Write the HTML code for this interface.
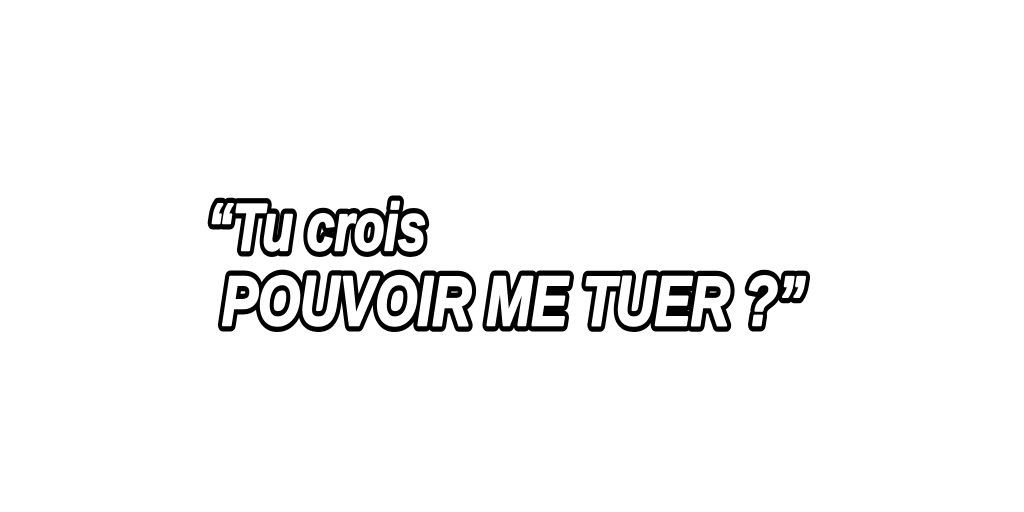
<!DOCTYPE html>
<html><head><style>html,body{margin:0;padding:0;background:#fff;width:1024px;height:512px;overflow:hidden}</style></head>
<body>
<svg width="1024" height="512" xmlns="http://www.w3.org/2000/svg">
<g font-family="'Liberation Sans Narrow','Liberation Sans',sans-serif" font-weight="bold" font-style="italic" stroke-linejoin="round">
<g fill="#000" stroke="#000" stroke-width="13">
<text x="208" y="250" font-size="66" textLength="218" lengthAdjust="spacingAndGlyphs">“Tu crois</text>
<text x="222" y="325" font-size="70" textLength="583" lengthAdjust="spacingAndGlyphs">POUVOIR ME TUER ?”</text>
</g>
<g fill="#fff" stroke="#fff" stroke-width="2.5">
<text x="208" y="250" font-size="66" textLength="218" lengthAdjust="spacingAndGlyphs">“Tu crois</text>
<text x="222" y="325" font-size="70" textLength="583" lengthAdjust="spacingAndGlyphs">POUVOIR ME TUER ?”</text>
</g>
</g>
</svg>
</body></html>
